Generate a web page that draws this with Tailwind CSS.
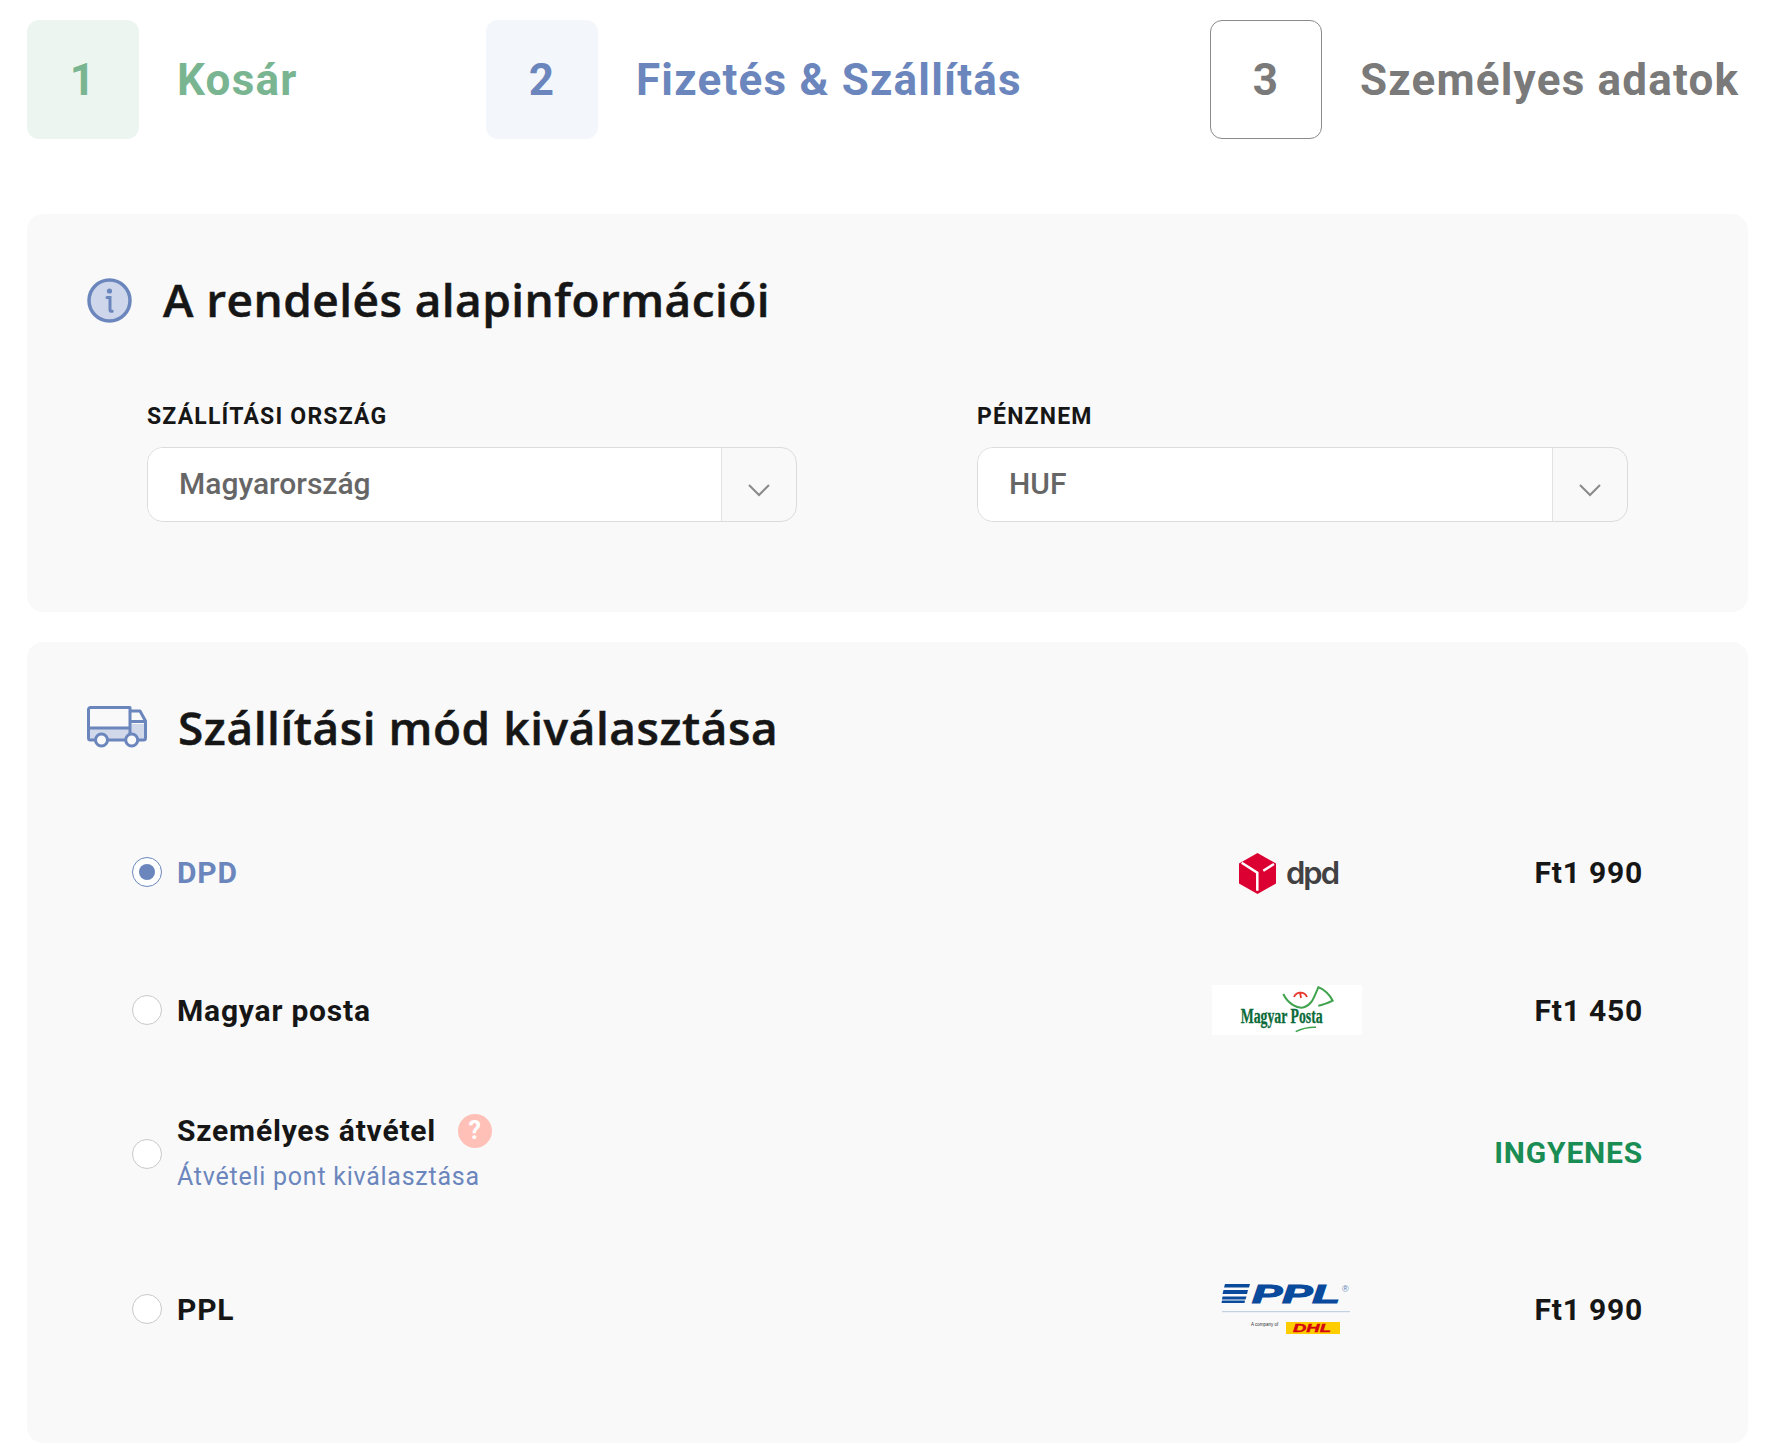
<!DOCTYPE html>
<html lang="hu">
<head>
    <meta charset="UTF-8">
    <title>Fizetés & Szállítás</title>
    <script src="https://cdn.jsdelivr.net/npm/@tailwindcss/browser@4"></script>
</head>
<body class="bg-white font-['Roboto',sans-serif] text-[#161616]">
    <div class="w-[1774px] h-[1452px] overflow-hidden pl-[27px] pr-[26px] pt-[20px]">
        <!-- steps -->
        <div class="flex items-center h-[119px] text-[44px] font-bold tracking-[1.2px]">
            <div class="w-[112px] h-[119px] rounded-xl bg-[#edf5f0] text-[#7ab592] flex items-center justify-center">1</div>
            <div class="ml-[38px] w-[309px] text-[#7ab592]">Kosár</div>
            <div class="w-[112px] h-[119px] rounded-xl bg-[#f3f6fb] text-[#6b86bd] flex items-center justify-center">2</div>
            <div class="ml-[38px] w-[574px] text-[#6b86bd]">Fizetés &amp; Szállítás</div>
            <div class="w-[112px] h-[119px] rounded-xl border border-[#8a8a8a] text-[#7a7a7a] flex items-center justify-center">3</div>
            <div class="ml-[38px] text-[#7a7a7a] whitespace-nowrap">Személyes adatok</div>
        </div>

        <!-- alap info -->
        <section class="mt-[75px] h-[398px] rounded-2xl bg-[#f9f9f9] pt-[56px] pl-[60px]">
            <div class="flex items-center h-[60px]">
                <svg class="w-[45px] h-[45px]" viewBox="0 0 45 45">
                    <circle cx="22.5" cy="22.5" r="20.5" fill="#cdd6ea" stroke="#6b86bd" stroke-width="3.5"/>
                    <circle cx="22.5" cy="13" r="2.6" fill="#6b86bd"/>
                    <path d="M20 19.5h3v12.5c0 1 .8 1.500 2.200 1.200" fill="none" stroke="#6b86bd" stroke-width="3" stroke-linecap="round"/>
                </svg>
                <h2 class="ml-[31px] pb-[2px] font-['Open_Sans',sans-serif] font-semibold [-webkit-text-stroke:0.5px_#161616] text-[46px] tracking-[0.45px] whitespace-nowrap">A rendelés alapinformációi</h2>
            </div>
            <div class="flex mt-[71px] pl-[60px]">
                <div class="w-[830px]">
                    <div class="text-[23px] font-bold tracking-[1.2px] leading-[32px]">SZÁLLÍTÁSI ORSZÁG</div>
                    <div class="mt-[14px] w-[650px] h-[75px] flex rounded-2xl border border-[#dcdcdc] overflow-hidden">
                        <div class="w-[574px] bg-white border-r border-[#e2e2e2] pl-[31px] pb-[2px] flex items-center text-[30px] font-medium text-[#666]">Magyarország</div>
                        <div class="flex-1 flex items-center justify-center pt-[10px]">
                            <svg class="w-[24px] h-[14px]" viewBox="0 0 24 14"><path d="M2 2l10 10L22 2" fill="none" stroke="#8a8a8a" stroke-width="2"/></svg>
                        </div>
                    </div>
                </div>
                <div class="w-[651px]">
                    <div class="text-[23px] font-bold tracking-[1.2px] leading-[32px]">PÉNZNEM</div>
                    <div class="mt-[14px] w-[651px] h-[75px] flex rounded-2xl border border-[#dcdcdc] overflow-hidden">
                        <div class="w-[575px] bg-white border-r border-[#e2e2e2] pl-[31px] pb-[2px] flex items-center text-[30px] font-medium text-[#666]">HUF</div>
                        <div class="flex-1 flex items-center justify-center pt-[10px]">
                            <svg class="w-[24px] h-[14px]" viewBox="0 0 24 14"><path d="M2 2l10 10L22 2" fill="none" stroke="#8a8a8a" stroke-width="2"/></svg>
                        </div>
                    </div>
                </div>
            </div>
        </section>

        <!-- szallitas -->
        <section class="mt-[30px] h-[801px] rounded-2xl bg-[#f9f9f9] pt-[55px] pl-[60px] pr-[105px]">
            <div class="flex items-center h-[60px]">
                <svg class="w-[60px] h-[42px]" viewBox="0 0 60 42">
                    <path d="M1.5 22H43V34H1.5z M43 18H58.5V34H43z" fill="#d0d8e9"/>
                    <path d="M9 34H3.5a2 2 0 0 1-2-2V3.5a2 2 0 0 1 2-2H43V34H21M43 22H1.5M43 5h10l5.500 10v17a2 2 0 0 1-2 2h-5.500M38 34h-17M43 15.500H58" fill="none" stroke="#6b86bd" stroke-width="3" stroke-linejoin="round"/>
                    <circle cx="14.500" cy="34" r="6" fill="#f9f9f9" stroke="#6b86bd" stroke-width="3"/>
                    <circle cx="44.700" cy="34" r="6" fill="#f9f9f9" stroke="#6b86bd" stroke-width="3"/>
                </svg>
                <h2 class="ml-[31px] font-['Open_Sans',sans-serif] font-semibold [-webkit-text-stroke:0.5px_#161616] text-[46px] tracking-[0.55px] whitespace-nowrap">Szállítási mód kiválasztása</h2>
            </div>

            <div class="mt-[46px] pl-[45px] text-[30px] font-bold tracking-[0.8px]">
                <!-- DPD -->
                <div class="h-[138px] flex items-center">
                    <span class="w-[30px] h-[30px] rounded-full bg-white border-[1.5px] border-[#6b86bd] flex items-center justify-center">
                        <span class="w-[16px] h-[16px] rounded-full bg-[#6b86bd]"></span>
                    </span>
                    <div class="ml-[15px] flex-1 text-[#6b86bd]">DPD</div>
                    <svg class="w-[150px] h-[50px] overflow-visible tracking-normal" viewBox="0 0 150 50">
                        <path d="M45.500 6L64 16.500V36.500L45.500 47L27 36.500V16.500z" fill="#dc0032"/>
                        <path d="M29.700 15.700L45.300 25.700V43.700M51.300 23.700L62 17" fill="none" stroke="#fff" stroke-width="2.500"/>
                        <text x="74" y="37" font-family="Inter" font-size="31" font-weight="600" letter-spacing="-2" fill="#414042">dpd</text>
                    </svg>
                    <div class="w-[281px] text-right">Ft1 990</div>
                </div>
                <!-- Posta -->
                <div class="h-[138px] flex items-center">
                    <span class="w-[30px] h-[30px] rounded-full bg-white border-[1.5px] border-[#c9c9c9]"></span>
                    <div class="ml-[15px] flex-1">Magyar posta</div>
                    <svg class="w-[150px] h-[50px] bg-white overflow-visible tracking-normal" viewBox="0 0 150 50">
                        <path d="M71.300 9C76 19 86 24 92 22.300C100 20 102 12 106.300 2.300C112 4 118 10 120.700 15.700C116 18 111 20 106.300 20.700" fill="none" stroke="#3fa34d" stroke-width="2"/>
                        <path d="M82 12a7 7 0 0 1 13 0M88 7l1 6" fill="none" stroke="#e8392f" stroke-width="1.800"/>
                        <text x="28.700" y="38" font-family="Liberation Serif" font-size="20" font-weight="700" fill="#0b6b3a" stroke="#0b6b3a" stroke-width=".3" textLength="82" lengthAdjust="spacingAndGlyphs">Magyar Posta</text>
                        <path d="M83.700 46.700C90 43.500 97 42 104 42.300" fill="none" stroke="#3fa34d" stroke-width="1.500"/>
                    </svg>
                    <div class="w-[281px] text-right">Ft1 450</div>
                </div>
                <!-- Szemelyes -->
                <div class="h-[150px] flex items-center">
                    <span class="w-[30px] h-[30px] rounded-full bg-white border-[1.5px] border-[#c9c9c9]"></span>
                    <div class="ml-[15px] flex-1 pb-[5px]">
                        <div class="flex items-center h-[40px]">
                            <span>Személyes átvétel</span>
                            <span class="ml-[22px] w-[34px] h-[34px] rounded-full bg-[#ffc0b8] text-white text-[25px] flex items-center justify-center">?</span>
                        </div>
                        <div class="mt-[10px] text-[25px] font-normal tracking-[0.75px] text-[#6b86bd] leading-[32px]">Átvételi pont kiválasztása</div>
                    </div>
                    <div class="text-[#1a8d54] pb-[3px]">INGYENES</div>
                </div>
                <!-- PPL -->
                <div class="h-[160px] flex items-center">
                    <span class="w-[30px] h-[30px] rounded-full bg-white border-[1.5px] border-[#c9c9c9]"></span>
                    <div class="ml-[15px] flex-1">PPL</div>
                    <svg class="w-[150px] h-[50px] overflow-visible tracking-normal" viewBox="0 0 150 50">
                        <path d="M13 0H38L37 3.500H12zM11.500 6H36L35 10H10.500zM10.500 12.500H34.500L33.500 15.500H10zM10 16.500H33L32.500 19H9.500z" fill="#0a4a9c"/>
                        <text x="40" y="19" font-family="Liberation Sans" font-size="26" font-weight="700" font-style="italic" fill="#0a4a9c" stroke="#0a4a9c" stroke-width="1.2" textLength="88" lengthAdjust="spacingAndGlyphs">PPL</text>
                        <text x="130" y="8" font-family="Liberation Sans" font-size="9" font-weight="400" fill="#5f86b8">®</text>
                        <path d="M10 27.700H138" stroke="#b8c8dc" stroke-width="1"/>
                        <text x="39" y="42" font-family="Liberation Sans" font-size="4.500" font-weight="400" fill="#333">A company of</text>
                        <rect x="74" y="38" width="54" height="12" fill="#fc0"/>
                        <text x="81" y="48" font-family="Liberation Sans" font-size="11" font-weight="700" font-style="italic" fill="#d40511" stroke="#d40511" stroke-width=".4" textLength="38" lengthAdjust="spacingAndGlyphs">DHL</text>
                    </svg>
                    <div class="w-[281px] text-right">Ft1 990</div>
                </div>
            </div>
        </section>
    </div>
</body>
</html>
